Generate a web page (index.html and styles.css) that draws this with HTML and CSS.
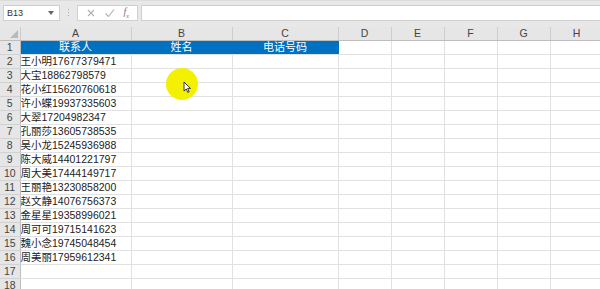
FILE: index.html
```html
<!DOCTYPE html>
<html lang="zh">
<head>
<meta charset="utf-8">
<link rel="stylesheet" href="styles.css">
</head>
<body>
<div class="app">
  <div class="toolbar">
    <div class="namebox"><span>B13</span><svg class="caret" width="6" height="4" viewBox="0 0 6 4"><path d="M0 0h6L3 4z" fill="#666"/></svg></div>
    <div class="grip"><i></i><i></i><i></i></div>
    <div class="fxbox">
      <svg width="10" height="10" viewBox="0 0 10 10"><path d="M2 2l6 6M8 2l-6 6" stroke="#b0b0b0" stroke-width="1.1" fill="none"/></svg>
      <svg width="11" height="10" viewBox="0 0 11 10"><path d="M1.5 5.5l3 3 5.5-7" stroke="#b0b0b0" stroke-width="1.1" fill="none"/></svg>
      <span class="fx">f<sub>x</sub></span>
    </div>
    <div class="formula"></div>
  </div>
  <div class="sheet">
    <table class="grid">
      <colgroup>
        <col class="c-rh"><col class="c-a"><col class="c-b"><col class="c-c"><col class="c-n"><col class="c-n"><col class="c-n"><col class="c-n"><col class="c-n">
      </colgroup>
      <thead>
        <tr class="colhead">
          <th class="corner"><span class="tri"></span></th>
          <th>A</th><th>B</th><th>C</th><th>D</th><th>E</th><th>F</th><th>G</th><th>H</th>
        </tr>
      </thead>
      <tbody>
        <tr class="title"><th>1</th><td class="blue">联系人</td><td class="blue">姓名</td><td class="blue">电话号码</td><td></td><td></td><td></td><td></td><td></td></tr>
        <tr><th>2</th><td>王小明17677379471</td><td></td><td></td><td></td><td></td><td></td><td></td><td></td></tr>
        <tr><th>3</th><td>大宝18862798579</td><td></td><td></td><td></td><td></td><td></td><td></td><td></td></tr>
        <tr><th>4</th><td>花小红15620760618</td><td></td><td></td><td></td><td></td><td></td><td></td><td></td></tr>
        <tr><th>5</th><td>许小蝶19937335603</td><td></td><td></td><td></td><td></td><td></td><td></td><td></td></tr>
        <tr><th>6</th><td>大翠17204982347</td><td></td><td></td><td></td><td></td><td></td><td></td><td></td></tr>
        <tr><th>7</th><td>孔丽莎13605738535</td><td></td><td></td><td></td><td></td><td></td><td></td><td></td></tr>
        <tr><th>8</th><td>吴小龙15245936988</td><td></td><td></td><td></td><td></td><td></td><td></td><td></td></tr>
        <tr><th>9</th><td>陈大威14401221797</td><td></td><td></td><td></td><td></td><td></td><td></td><td></td></tr>
        <tr><th>10</th><td>周大美17444149717</td><td></td><td></td><td></td><td></td><td></td><td></td><td></td></tr>
        <tr><th>11</th><td>王丽艳13230858200</td><td></td><td></td><td></td><td></td><td></td><td></td><td></td></tr>
        <tr><th>12</th><td>赵文静14076756373</td><td></td><td></td><td></td><td></td><td></td><td></td><td></td></tr>
        <tr><th>13</th><td>金星星19358996021</td><td></td><td></td><td></td><td></td><td></td><td></td><td></td></tr>
        <tr><th>14</th><td>周可可19715141623</td><td></td><td></td><td></td><td></td><td></td><td></td><td></td></tr>
        <tr><th>15</th><td>魏小念19745048454</td><td></td><td></td><td></td><td></td><td></td><td></td><td></td></tr>
        <tr><th>16</th><td>周美丽17959612341</td><td></td><td></td><td></td><td></td><td></td><td></td><td></td></tr>
        <tr><th>17</th><td></td><td></td><td></td><td></td><td></td><td></td><td></td><td></td></tr>
        <tr><th>18</th><td></td><td></td><td></td><td></td><td></td><td></td><td></td><td></td></tr>
      </tbody>
    </table>
    <div class="pointer">
      <svg class="arrow" width="9" height="12" viewBox="0 0 9 12"><path d="M1 1v9l2.2-2 1.6 3.4 1.4-.7-1.6-3.3H7.5z" fill="#fff" stroke="#222" stroke-width="0.9" stroke-linejoin="round"/></svg>
    </div>
  </div>
</div>
</body>
</html>
```
FILE: styles.css
```css
* { box-sizing: border-box; }
html, body { margin: 0; padding: 0; }
body {
  width: 600px;
  height: 289px;
  overflow: hidden;
  background: #fff;
  font-family: "Liberation Sans", "Noto Sans CJK SC", sans-serif;
}
.app { width: 600px; height: 289px; overflow: hidden; }

.toolbar {
  height: 27px;
  background: #e8e8e8;
  display: flex;
  align-items: flex-start;
  padding: 5px 0 0 3px;
  border-top: 1px solid #dcdcdc;
}
.namebox {
  width: 57px;
  height: 16px;
  background: #fff;
  border: 1px solid #cfcfcf;
  display: flex;
  align-items: center;
  justify-content: space-between;
  padding: 0 5px 0 3px;
  font-size: 9px;
  color: #333;
  margin-top: -1px;
}
.grip {
  width: 17px;
  display: flex;
  flex-direction: column;
  align-items: center;
  gap: 2px;
  padding-top: 3px;
}
.grip i { display: block; width: 1px; height: 1px; background: #aaa; }
.fxbox {
  width: 61px;
  height: 16px;
  margin-top: -1px;
  background: #fff;
  border: 1px solid #cfcfcf;
  display: flex;
  align-items: center;
  justify-content: space-around;
  padding: 0 4px;
}
.fx {
  font-family: "Liberation Serif", serif;
  font-style: italic;
  font-size: 10px;
  color: #777;
  line-height: 1;
}
.fx sub { font-size: 6px; }
.formula {
  flex: 1;
  height: 16px;
  margin-top: -1px;
  margin-left: 3px;
  background: #fff;
  border: 1px solid #cfcfcf;
  border-right: none;
}

.sheet { position: relative; }
.grid {
  border-collapse: collapse;
  table-layout: fixed;
  width: 603px;
}
.c-rh { width: 20px; }
.c-a { width: 111px; }
.c-b { width: 101px; }
.c-c { width: 106px; }
.c-n { width: 53px; }

.grid th, .grid td {
  padding: 0;
  overflow: hidden;
  white-space: nowrap;
}
.colhead th {
  height: 13px;
  background: #e6e6e6;
  border-right: 1px solid #cdcdcd;
  border-bottom: 1px solid #bdbdbd;
  font-weight: normal;
  font-size: 10.5px;
  color: #444;
  line-height: 12px;
  text-align: center;
}
.corner { position: relative; }
.tri {
  position: absolute;
  right: 2px;
  bottom: 2px;
  width: 0; height: 0;
  border-left: 8px solid transparent;
  border-bottom: 8px solid #b9b9b9;
}
tbody th {
  height: 14px;
  background: #e6e6e6;
  border-right: 1px solid #bdbdbd;
  border-bottom: 1px solid #d2d2d2;
  font-weight: normal;
  font-size: 10.5px;
  color: #444;
  text-align: center;
  line-height: 13px;
}
tbody td {
  height: 14px;
  border-right: 1px solid #e1e1e1;
  border-bottom: 1px solid #e1e1e1;
  font-size: 10.5px;
  color: #222;
  line-height: 13px;
  padding-left: 2px;
}
td.blue {
  background: #0070c0;
  color: #fff;
  text-align: center;
  font-size: 11px;
  border-right-color: #0070c0;
  border-bottom-color: #e1e1e1;
  padding-left: 0;
}

.pointer {
  position: absolute;
  left: 166px;
  top: 41px;
  width: 32px;
  height: 32px;
  border-radius: 50%;
  background: #f3f000;
}
.arrow {
  position: absolute;
  left: 17px;
  top: 13px;
}
```
